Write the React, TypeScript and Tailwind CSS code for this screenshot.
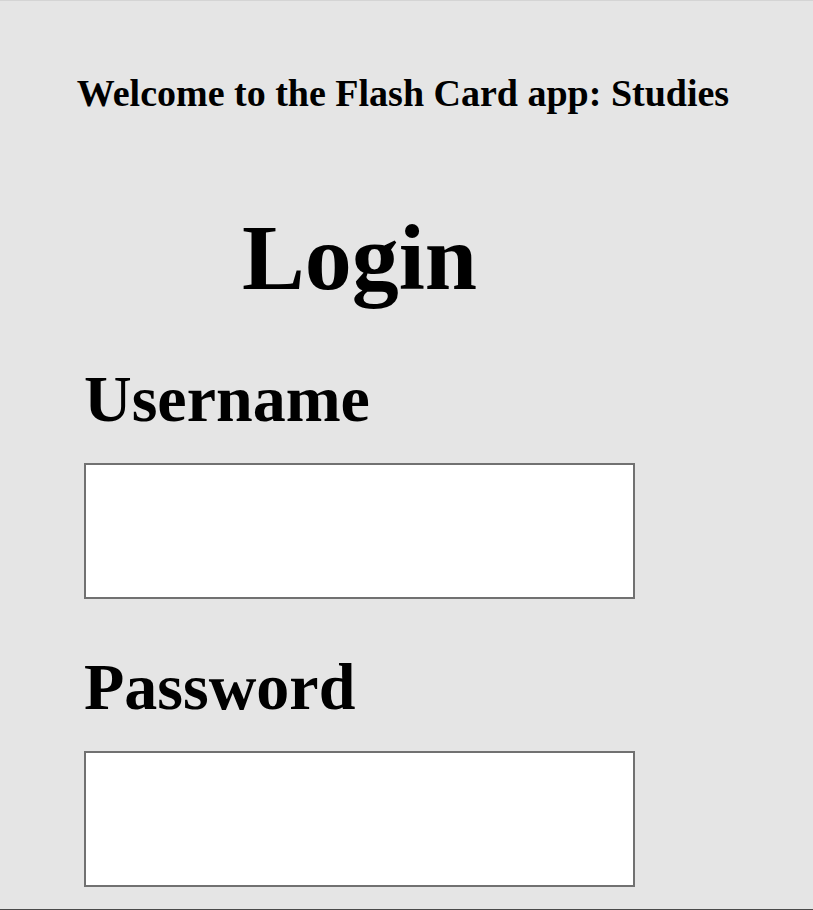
import React from "react";

export default function App() {
  const serif = { fontFamily: '"Liberation Serif", "Times New Roman", serif' };
  return (
    <div
      className="box-border h-[910px] overflow-hidden bg-[#e5e5e5] border-t border-b border-t-[#d4d4d4] border-b-[#4a4a4a] text-black"
      style={serif}
    >
      <div className="pt-[70px] pr-[7px] text-center">
        <h1 className="m-0 text-[38px] leading-[44px] font-bold">
          Welcome to the Flash Card app: Studies
        </h1>
      </div>
      <div className="ml-[84px] w-[551px] flex flex-col">
        <h2 className="mt-[88px] text-center text-[94px] leading-[108px] font-bold">
          Login
        </h2>
        <label className="mt-[50px] text-[66px] leading-[76px] font-bold">
          Username
        </label>
        <input
          type="text"
          className="mt-[26px] box-border h-[136px] w-[551px] bg-white border-2 border-[#717171] outline-none"
        />
        <label className="mt-[50px] text-[66px] leading-[76px] font-bold">
          Password
        </label>
        <input
          type="password"
          className="mt-[26px] box-border h-[136px] w-[551px] bg-white border-2 border-[#717171] outline-none"
        />
      </div>
    </div>
  );
}
